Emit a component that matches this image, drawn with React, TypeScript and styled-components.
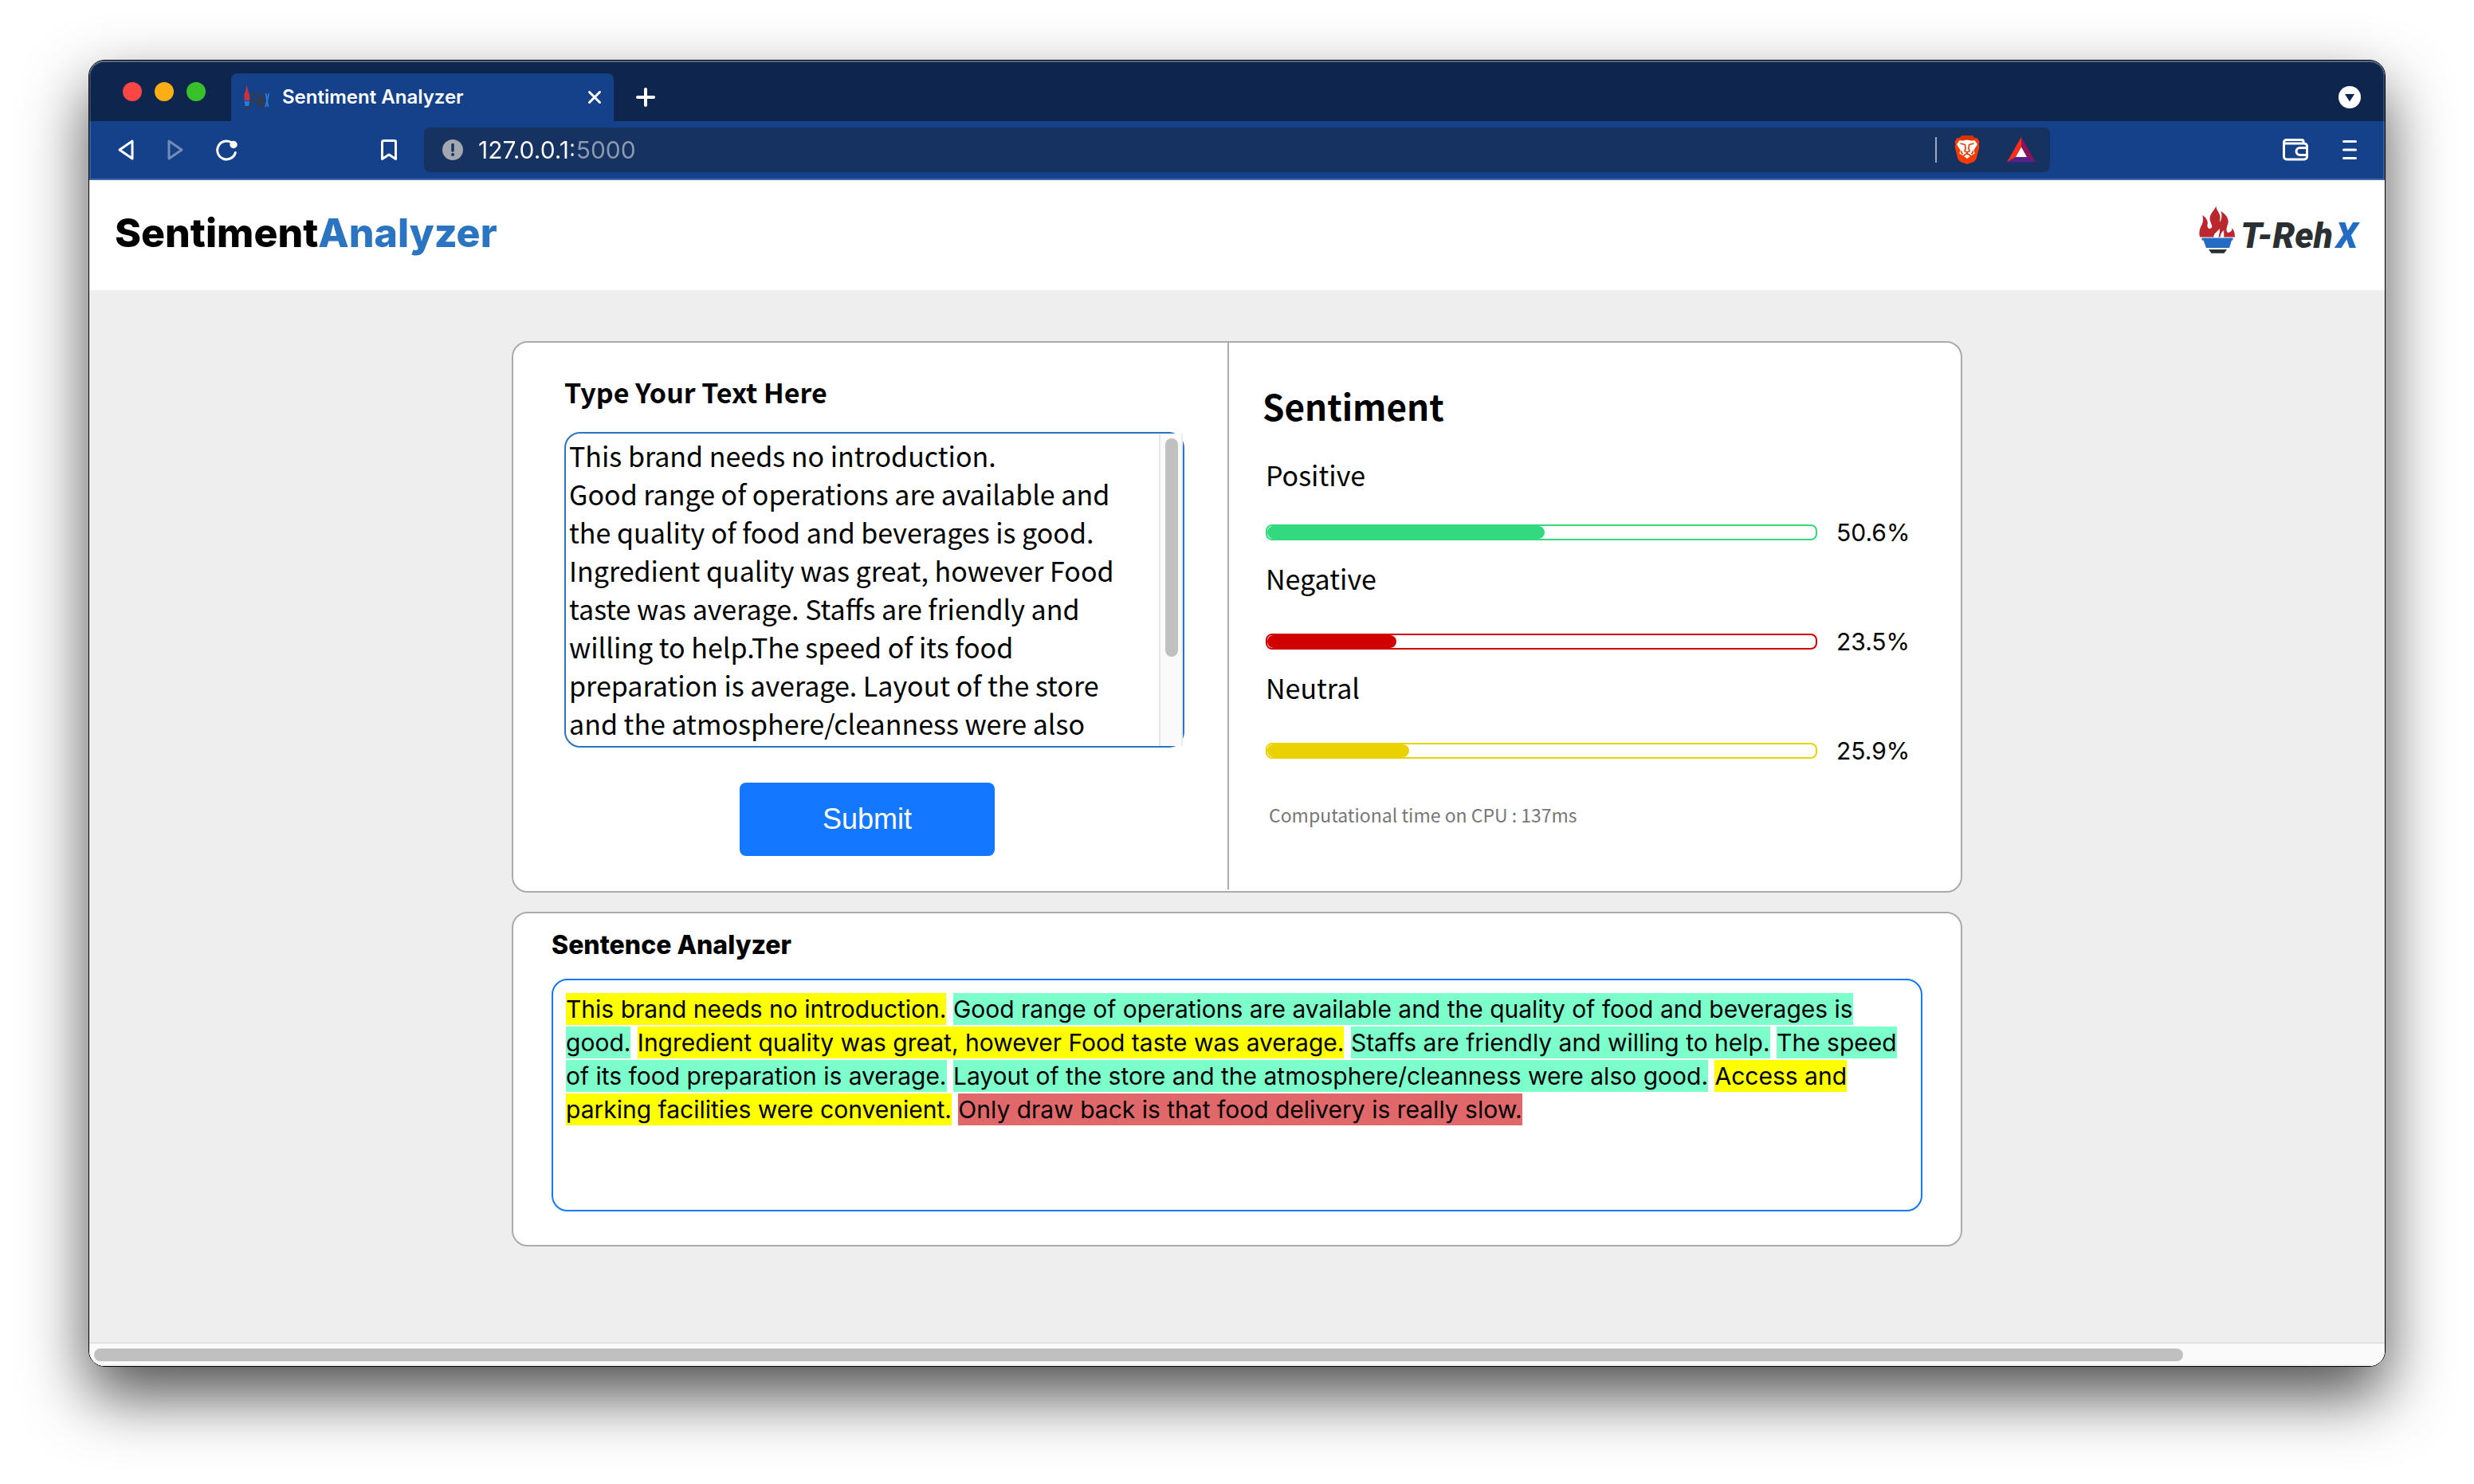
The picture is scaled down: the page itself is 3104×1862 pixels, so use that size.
import React, { useId, useState } from "react";
import styled, { createGlobalStyle } from "styled-components";

const sourceSans = `"Noto Sans CJK JP", "Noto Sans", sans-serif`;
const display = `Inter, "Open Sans", sans-serif`;

const GlobalStyle = createGlobalStyle`
  * { box-sizing: border-box; }
  body { margin: 0; background: #fff; color: #000; font-family: ${sourceSans}; }
  h1, h2, h3, p { margin: 0; }
  button { border: 0; padding: 0; background: none; color: inherit; cursor: pointer; }
  svg { display: block; flex: none; }
`;

/* ---------- window ---------- */

const Desktop = styled.div`
  min-height: 100vh;
  padding: 75px 111px 147px;
  display: flex;
  flex-direction: column;
`;

const Window = styled.div`
  flex: 1;
  display: flex;
  flex-direction: column;
  border: 1px solid #000;
  border-radius: 20px;
  overflow: hidden;
  box-shadow: 0 36px 80px rgba(0, 0, 0, 0.69);
`;

const TabBar = styled.div`
  height: 76px;
  padding: 0 28px 0 42px;
  display: flex;
  align-items: flex-end;
  background: #0e264e;
  border-radius: 19px 19px 0 0;
  box-shadow: inset 0 2px 0 #586a86, inset 2px 0 0 #33476a, inset -2px 0 0 #33476a;
  color: #fff;
`;

const TrafficLights = styled.div`
  display: flex;
  gap: 16px;
  width: 136px;
  height: 76px;
  padding-top: 27px;
`;

const Light = styled.button<{ $color: string }>`
  width: 24px;
  height: 24px;
  border-radius: 50%;
  background: ${(p) => p.$color};
`;

const Tab = styled.div`
  width: 480px;
  height: 60px;
  padding: 0 15px 0 16px;
  display: flex;
  align-items: center;
  gap: 16px;
  background: #144189;
  border-radius: 8px 8px 0 0;
  font: 600 24px/32px ${display};
`;

const TabTitle = styled.span`
  flex: 1;
`;

const TabAction = styled.button`
  height: 60px;
  display: flex;
  align-items: center;
`;

const NewTab = styled(TabAction)`
  margin-left: 28px;
`;

const TabSearch = styled(TabAction)`
  margin-left: auto;
  padding-right: 2px;
`;

const Toolbar = styled.div`
  height: 74px;
  display: grid;
  grid-template-columns: 420px 1fr 420px;
  align-items: center;
  background: #144189;
  border-bottom: 2px solid #3f65a4;
  box-shadow: inset 2px 0 0 #375d9b, inset -2px 0 0 #375d9b;
  color: #fff;
`;

const NavGroup = styled.nav`
  padding: 0 34px;
  display: flex;
  align-items: center;
  gap: 38px;
`;

const BookmarkButton = styled.button`
  margin-left: auto;
`;

const AddressBar = styled.div`
  height: 56px;
  padding: 0 16px 0 22px;
  display: flex;
  align-items: center;
  background: #163260;
  border-radius: 8px;
`;

const Address = styled.input`
  flex: 1;
  margin-left: 18px;
  padding: 0;
  border: 0;
  outline: 0;
  font: 400 30px/40px ${display};
  color: transparent;
  background: linear-gradient(90deg, #fff 119px, #8b9ab0 119px);
  background-clip: text;
  -webkit-background-clip: text;
`;

const AddressDivider = styled.i`
  width: 2px;
  height: 32px;
  margin-right: 22px;
  background: #a2a9b4;
`;

const Extension = styled.button`
  margin-right: 34px;

  &:last-child {
    margin-right: 2px;
  }
`;

const MenuGroup = styled.div`
  display: flex;
  justify-content: flex-end;
  align-items: center;
  gap: 42px;
  padding-right: 34px;
`;

const ScrollTrack = styled.div`
  height: 30px;
  padding: 6px;
  background: #fafafa;
  border-top: 2px solid #e2e2e2;
  border-bottom: 2px solid #ededed;
`;

const ScrollThumb = styled.div`
  width: 91.4%;
  height: 16px;
  border-radius: 8px;
  background: #c0c0c0;
`;

/* ---------- page ---------- */

const Header = styled.header`
  height: 138px;
  padding: 32px 34px 0 32px;
  display: flex;
  align-items: flex-start;
  justify-content: space-between;
  background: #fff;
`;

const Brand = styled.h1`
  font: 800 50px/68px ${display};

  span {
    color: #2a74c1;
  }
`;

const LogoLink = styled.a`
  display: flex;
  align-items: flex-end;
  gap: 6px;
  color: #2a2f32;
  text-decoration: none;
  font: italic 900 44px/44px Roboto, sans-serif;

  b {
    margin-left: 4px;
    font-weight: 900;
    color: #226cc4;
  }
`;

const Main = styled.main`
  flex: 1;
  padding: 64px 32px;
  background: #eee;
`;

const Stack = styled.div`
  max-width: 1820px;
  margin: 0 auto;
  display: grid;
  gap: 24px;
`;

const Card = styled.section`
  background: #fff;
  border: 2px solid #ababab;
  border-radius: 20px;
`;

const SplitCard = styled(Card)`
  display: grid;
  grid-template-columns: 896fr 920fr;
`;

const Form = styled.form`
  padding: 38px 54px 44px 64px;
  display: flex;
  flex-direction: column;
  align-items: flex-start;
`;

const FieldLabel = styled.label`
  margin-bottom: 26px;
  font: 700 34px/48px ${sourceSans};
`;

const TextFrame = styled.div`
  align-self: stretch;
  display: flex;
  border: 2px solid #2a74c1;
  border-radius: 20px;
`;

const TextBox = styled.textarea`
  flex: 1;
  min-width: 0;
  height: 392px;
  padding: 4px 16px 4px 4px;
  border: 0;
  outline: 0;
  resize: none;
  overflow: hidden;
  background: transparent;
  font: 400 34px/48px ${sourceSans};
  color: #000;
`;

const TextTrack = styled.div`
  width: 30px;
  padding: 6px;
  background: #fafafa;
  border-left: 2px solid #e6e6e6;
  border-right: 2px solid #ededed;
`;

const TextThumb = styled.div`
  width: 16px;
  height: 274px;
  border-radius: 8px;
  background: #c0c0c0;
`;

const Submit = styled.button`
  width: 320px;
  height: 92px;
  margin: 44px 0 0 220px;
  border-radius: 8px;
  background: #1377ff;
  color: #fff;
  font: 400 36px/48px "Liberation Sans", Arial, sans-serif;
`;

const Results = styled.div`
  margin-bottom: 2px;
  padding: 47px 64px 38px 42px;
  border-left: 2px solid #ababab;
`;

const ResultsTitle = styled.h2`
  margin-bottom: 31px;
  font: 700 44px/64px ${sourceSans};
`;

const Scores = styled.div`
  display: grid;
  gap: 10px;
  padding-left: 4px;
`;

const Score = styled.div`
  display: grid;
  gap: 31px;

  &:first-child {
    gap: 24px;
  }
`;

const ScoreLabel = styled.div`
  font: 400 34px/48px ${sourceSans};
`;

const ScoreRow = styled.div`
  display: flex;
  align-items: center;
  gap: 24px;
`;

const Bar = styled.div<{ $color: string }>`
  flex: 1;
  height: 20px;
  border: 2px solid ${(p) => p.$color};
  border-radius: 8px;
`;

const Fill = styled.div<{ $color: string }>`
  height: 16px;
  border-radius: 8px;
  background: ${(p) => p.$color};
`;

const Percent = styled.span`
  width: 92px;
  font: 400 30px/48px ${display};
  white-space: nowrap;
`;

const Timing = styled.p`
  margin-top: 38px;
  padding-left: 8px;
  color: #777;
  font: 400 23px/36px ${sourceSans};
`;

const SentenceCard = styled(Card)`
  padding: 16px 48px 42px;
`;

const SentenceTitle = styled.h3`
  margin-bottom: 18px;
  font: 800 32px/48px ${display};
`;

const SentenceBox = styled.div`
  min-height: 292px;
  padding: 15px 16px;
  border: 2px solid #1377ff;
  border-radius: 20px;
  font: 400 30px/42px ${display};
`;

const Sentence = styled.mark<{ $color: string }>`
  padding: 2px 0;
  color: #000;
  background: ${(p) => p.$color};
`;

/* ---------- icons ---------- */

const line = { fill: "none", stroke: "currentColor", strokeWidth: 3, strokeLinejoin: "round", strokeLinecap: "round" } as const;

const BackIcon = () => (
  <svg width="24" height="28" viewBox="0 0 24 28" {...line}>
    <path d="M20 3v22L4 14z" />
  </svg>
);

const ForwardIcon = () => (
  <svg width="24" height="28" viewBox="0 0 24 28" {...line} opacity="0.4">
    <path d="M4 3v22l16-11z" />
  </svg>
);

const ReloadIcon = () => (
  <svg width="28" height="28" viewBox="0 0 28 28" {...line}>
    <path d="M20 4.500A11.500 11.500 0 1 0 25.300 17.500" />
    <circle cx="23" cy="7.500" r="3.200" fill="currentColor" />
  </svg>
);

const BookmarkIcon = () => (
  <svg width="20" height="28" viewBox="0 0 20 28" {...line}>
    <path d="M1.500 4a1.500 1.500 0 0 1 1.500-1.500h14A1.500 1.500 0 0 1 18.500 4v21.500L10 20l-8.500 5.500z" />
  </svg>
);

const InfoIcon = () => (
  <svg width="28" height="28" viewBox="0 0 28 28">
    <circle cx="14" cy="14" r="13" fill="#a3a8b0" />
    <path d="M14 7.500v7.500" stroke="#163260" strokeWidth="3.400" strokeLinecap="round" />
    <circle cx="14" cy="20" r="2" fill="#163260" />
  </svg>
);

const CloseIcon = () => (
  <svg width="18" height="18" viewBox="0 0 18 18" {...line}>
    <path d="M2.500 2.500l13 13M15.500 2.500l-13 13" />
  </svg>
);

const PlusIcon = () => (
  <svg width="24" height="24" viewBox="0 0 24 24" {...line} strokeWidth="4">
    <path d="M12 2v20M2 12h20" />
  </svg>
);

const TabSearchIcon = () => (
  <svg width="28" height="28" viewBox="0 0 28 28">
    <circle cx="14" cy="14" r="14" fill="#fff" />
    <path d="M8 10h12l-6 9.500z" fill="#0e264e" />
  </svg>
);

const ShieldLionIcon = () => (
  <svg width="32" height="36" viewBox="0 0 32 36">
    <path fill="#fb3b00" d="M9.500 0h13l3.500 3.500 2.500-.5 3 5-1 3 1 3-4 15.500-3 3.500L16 36l-8.500-3-3-3.500L.5 14l1-3-1-3 3-5L6 3.500z" />
    <path fill="#d93200" d="M9.500 0h13L26 4l-4 2-6-.8L10 6 6 4z" />
    <path fill="#fff" d="M10.500 6.500L16 5.600l5.500.9 4-.3L29 11l-4.500 7.500 1.200 4-4.200 2.500L16 29l-5.500-4-4.200-2.500 1.200-4L3 11l3.500-4.800z" />
    <g fill="none" stroke="#e83800" strokeWidth="1.600">
      <path d="M7.500 10l6 1.600.5 5-1 3L16 21l3-1.400-1-3 .5-5 6-1.600M16 21v1.500l-5.500 3.700M16 22.500l5.500 3.700M8 19.500l2.500 4M24 19.500l-2.500 4" />
    </g>
  </svg>
);

const TokenIcon = () => (
  <svg width="36" height="32" viewBox="0 0 36 32">
    <path fill="#ff2d19" d="M18 0L0 31.500l11-6.500 7-12.500z" />
    <path fill="#8e1159" d="M18 0l18 31.500L25 25l-7-12.500z" />
    <path fill="#57208c" d="M0 31.500h36L25 25H11z" />
    <path fill="#fff" d="M18 12.500L25 25H11z" />
  </svg>
);

const WalletIcon = () => (
  <svg width="32" height="28" viewBox="0 0 32 28" {...line}>
    <path d="M26 6V3.500a2 2 0 0 0-2-2H4.500A3 3 0 0 0 1.500 4.500v18a3.500 3.500 0 0 0 3.500 3.500h22a3.500 3.500 0 0 0 3.500-3.500v-13A3.500 3.500 0 0 0 27 6H3" />
    <path d="M30 11.500h-8.500a4.200 4.200 0 0 0 0 9H30" />
  </svg>
);

const MenuIcon = () => (
  <svg width="20" height="28" viewBox="0 0 20 28" {...line}>
    <path d="M2.500 3.500h15M2.500 14h15M2.500 24.500h15" />
  </svg>
);

const TorchIcon = () => (
  <svg width="46" height="60" viewBox="0 0 46 60">
    <path
      fill="#bb272f"
      d="M21.500 0C21 6 27 9 26.500 15.500C26.300 18.500 25.500 20 26 20.500C28 19 29.500 13 27.500 7C34 11.500 37.500 16 36.500 22C35.500 26 33 30 35.500 33.500C39 34.500 42 31 41.500 28C44 31 45 35 45 39.500H31C32 36.500 30.500 35 31.500 31C27.500 33.500 27.500 36 26.500 39.500H24.500C25 35 27 33 25.500 29C23.500 33 18 34.500 18.500 39.500H1C-.5 33 1 28.500 3.500 24C5.500 20.500 5 16 4.500 12C8.500 15 12 19 10.500 24C10 27 12 30 15 28.500C18.500 26 14 22 13.500 17C13.500 9 20 6 21.500 0z"
    />
    <path fill="#226cc4" d="M3.500 40.500h39v3h-1.500L38 53H9L5.500 43.500h-2z" />
    <path fill="#2a2f32" d="M12 55h23l-3.500 4.800h-16z" />
  </svg>
);

const Favicon = () => (
  <svg width="32" height="32" viewBox="0 0 32 32">
    <path fill="#c9323a" d="M3.500 0l1.500 7 2 6 .5 7H.5V11l1.500-2z" />
    <path fill="#2a7bdc" d="M.5 21H7l-1 6H1.500z" />
    <path fill="#333c4a" d="M2 28h3.500v4H2zM8 11h6v3h-2l-1 14H8.500l1-14H8zM13 19h3v3h-3zM16.500 11H20l-1 17h-2.500zM20 16h2.500v12H20zM23 11h2v6h1.500v11H23z" />
    <path fill="none" stroke="#2a7bdc" strokeWidth="1.800" d="M27.500 11l3 17M31.500 11l-4.500 17" />
  </svg>
);

/* ---------- data ---------- */

const POSITIVE = "#7cffcb";
const NEUTRAL = "#ffff00";
const NEGATIVE = "#e0676a";

const sentences = [
  { text: "This brand needs no introduction.", color: NEUTRAL },
  { text: "Good range of operations are available and the quality of food and beverages is good.", color: POSITIVE },
  { text: "Ingredient quality was great, however Food taste was average.", color: NEUTRAL },
  { text: "Staffs are friendly and willing to help.", color: POSITIVE },
  { text: "The speed of its food preparation is average.", color: POSITIVE },
  { text: "Layout of the store and the atmosphere/cleanness were also good.", color: POSITIVE },
  { text: "Access and parking facilities were convenient.", color: NEUTRAL },
  { text: "Only draw back is that food delivery is really slow.", color: NEGATIVE },
];

const review =
  "This brand needs no introduction.\nGood range of operations are available and the quality of food and beverages is good. Ingredient quality was great, however Food taste was average. Staffs are friendly and willing to help.The speed of its food preparation is average. Layout of the store and the atmosphere/cleanness were also good. Access and parking facilities were convenient. Only draw back is that food delivery is really slow.";

const scores = [
  { label: "Positive", value: 50.6, color: "#33d97f" },
  { label: "Negative", value: 23.5, color: "#d10000" },
  { label: "Neutral", value: 25.9, color: "#ead200" },
];

function ScoreMeter({ label, value, color }: { label: string; value: number; color: string }) {
  const id = useId();
  return (
    <Score>
      <ScoreLabel id={id}>{label}</ScoreLabel>
      <ScoreRow>
        <Bar $color={color} role="meter" aria-labelledby={id} aria-valuemin={0} aria-valuemax={100} aria-valuenow={value}>
          <Fill $color={color} style={{ width: `${value}%` }} />
        </Bar>
        <Percent>{value}%</Percent>
      </ScoreRow>
    </Score>
  );
}

export default function App() {
  const [text, setText] = useState(review);
  const [url, setUrl] = useState("127.0.0.1:5000");

  return (
    <Desktop>
      <GlobalStyle />
      <Window>
        <TabBar>
          <TrafficLights>
            <Light $color="#fb4646" aria-label="Close window" />
            <Light $color="#fdae15" aria-label="Minimize window" />
            <Light $color="#38c12a" aria-label="Zoom window" />
          </TrafficLights>
          <Tab>
            <Favicon />
            <TabTitle>Sentiment Analyzer</TabTitle>
            <TabAction aria-label="Close tab"><CloseIcon /></TabAction>
          </Tab>
          <NewTab aria-label="New tab"><PlusIcon /></NewTab>
          <TabSearch aria-label="Search tabs"><TabSearchIcon /></TabSearch>
        </TabBar>
        <Toolbar>
          <NavGroup>
            <button aria-label="Back"><BackIcon /></button>
            <button aria-label="Forward"><ForwardIcon /></button>
            <button aria-label="Reload"><ReloadIcon /></button>
            <BookmarkButton aria-label="Bookmark"><BookmarkIcon /></BookmarkButton>
          </NavGroup>
          <AddressBar>
            <InfoIcon />
            <Address aria-label="Address" value={url} onChange={(e) => setUrl(e.target.value)} />
            <AddressDivider />
            <Extension aria-label="Shields"><ShieldLionIcon /></Extension>
            <Extension aria-label="Rewards"><TokenIcon /></Extension>
          </AddressBar>
          <MenuGroup>
            <button aria-label="Wallet"><WalletIcon /></button>
            <button aria-label="Menu"><MenuIcon /></button>
          </MenuGroup>
        </Toolbar>

        <Header>
          <Brand>Sentiment<span>Analyzer</span></Brand>
          <LogoLink href="#">
            <TorchIcon />
            <span>T-Reh<b>X</b></span>
          </LogoLink>
        </Header>

        <Main>
          <Stack>
            <SplitCard>
              <Form onSubmit={(e) => e.preventDefault()}>
                <FieldLabel htmlFor="review">Type Your Text Here</FieldLabel>
                <TextFrame>
                  <TextBox id="review" spellCheck={false} value={text} onChange={(e) => setText(e.target.value)} />
                  <TextTrack><TextThumb /></TextTrack>
                </TextFrame>
                <Submit type="submit">Submit</Submit>
              </Form>
              <Results>
                <ResultsTitle>Sentiment</ResultsTitle>
                <Scores>
                  {scores.map((s) => <ScoreMeter key={s.label} {...s} />)}
                </Scores>
                <Timing>Computational time on CPU : 137ms</Timing>
              </Results>
            </SplitCard>

            <SentenceCard>
              <SentenceTitle>Sentence Analyzer</SentenceTitle>
              <SentenceBox>
                {sentences.map((s) => (
                  <React.Fragment key={s.text}>
                    <Sentence $color={s.color}>{s.text}</Sentence>{" "}
                  </React.Fragment>
                ))}
              </SentenceBox>
            </SentenceCard>
          </Stack>
        </Main>
        <ScrollTrack><ScrollThumb /></ScrollTrack>
      </Window>
    </Desktop>
  );
}
